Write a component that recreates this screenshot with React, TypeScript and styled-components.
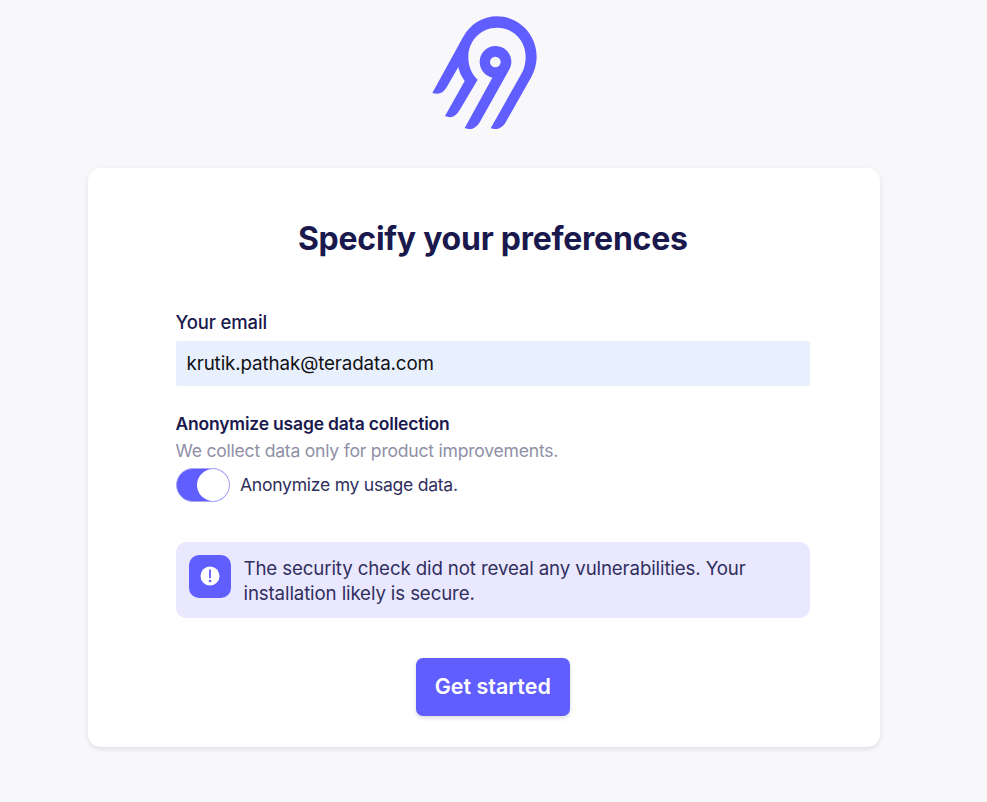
import React from "react";
import styled, { createGlobalStyle } from "styled-components";

const GlobalStyle = createGlobalStyle`
  * { box-sizing: border-box; }
  body {
    margin: 0;
    background: #f8f8fb;
    font-family: Inter, "Liberation Sans", sans-serif;
    color: #1a194d;
  }
`;

const Page = styled.main`
  height: 802px;
  overflow: hidden;
  display: flex;
  flex-direction: column;
  padding: 5px 107px 0 88px;
`;

const LogoMark = styled.svg`
  flex: none;
  width: 130px;
  height: 135px;
  margin-left: 332px;
  fill: #615eff;
`;

const Card = styled.section`
  flex: none;
  height: 579px;
  margin-top: 28px;
  padding: 47px 70px 0 87.5px;
  display: flex;
  flex-direction: column;
  background: #fff;
  border-radius: 13px;
  box-shadow: 0 2px 5px rgba(26, 25, 77, 0.12);
`;

const Title = styled.h1`
  margin: 0;
  text-align: center;
  font-size: 32px;
  line-height: 48px;
  font-weight: 700;
  letter-spacing: -0.25px;
  white-space: nowrap;
`;

const Label = styled.label`
  margin-top: 46px;
  font-size: 18.5px;
  line-height: 26px;
  font-weight: 500;
  letter-spacing: -0.12px;
`;

const EmailInput = styled.input`
  width: 634px;
  height: 45px;
  margin-top: 6px;
  padding: 0 11px;
  border: 0;
  border-radius: 2px;
  outline: 0;
  background: #e8f0fe;
  color: #101014;
  font: 400 18.8px/26px Inter, "Liberation Sans", sans-serif;
  letter-spacing: -0.12px;
`;

const SectionTitle = styled.h2`
  margin: 24px 0 0;
  font-size: 17.5px;
  line-height: 27px;
  font-weight: 600;
  letter-spacing: -0.19px;
`;

const Hint = styled.p`
  margin: 0;
  font-size: 17.6px;
  line-height: 27px;
  letter-spacing: -0.24px;
  color: #8f8fa6;
`;

const ToggleRow = styled.div`
  display: flex;
  align-items: center;
  gap: 10px;
  height: 34px;
  margin-top: 4px;
  color: #302f5e;
`;

const ToggleText = styled.span`
  padding-bottom: 1px;
  font-size: 17.6px;
  line-height: 24px;
  letter-spacing: -0.28px;
`;

const Switch = styled.button<{ $on: boolean }>`
  display: flex;
  justify-content: ${(p) => (p.$on ? "flex-end" : "flex-start")};
  width: 54.5px;
  height: 34px;
  padding: 0;
  border: 1px solid #aaa8f5;
  border-radius: 17px;
  background: ${(p) => (p.$on ? "#615eff" : "#d9d9e3")};
`;

const Knob = styled.span`
  width: 32px;
  height: 32px;
  border-radius: 50%;
  background: #fff;
`;

const Notice = styled.div`
  display: flex;
  gap: 13px;
  height: 76px;
  margin-top: 40px;
  padding: 12.5px 13px;
  border-radius: 10px;
  background: #eae8ff;
`;

const NoticeIcon = styled.div`
  flex: none;
  display: grid;
  place-items: center;
  width: 42px;
  height: 43px;
  border-radius: 10px;
  background: #615eff;
`;

const NoticeText = styled.p`
  margin: 0;
  padding-top: 1px;
  font-size: 18.7px;
  line-height: 25px;
  letter-spacing: -0.13px;
  color: #302f5e;
  white-space: nowrap;
`;

const Submit = styled.button`
  align-self: center;
  width: 153.5px;
  height: 58px;
  margin-top: 40px;
  padding: 0 0 2px;
  border: 0;
  border-radius: 7px;
  background: #615eff;
  color: #fff;
  font: 600 21.5px/30px Inter, "Liberation Sans", sans-serif;
  box-shadow: 0 2px 4px rgba(26, 25, 77, 0.16);
`;

function Logo() {
  return (
    <LogoMark viewBox="0 0 390 405" aria-label="Logo">
      <path d="M37 264 L128 98 C151 57 188 34 231 34 C297 34 350 88 350 155 C350 176 344 198 334 216 L258 350 C247 369 231 376 212 370 L305 205 C313 191 317 172 317 155 C317 107 279 68 231 68 C183 68 145 107 145 155 C145 184 155 207 173 224 L119 315 C108 335 93 341 75 333 L134 228 C125 216 118 201 115 186 L80 247 C70 265 55 270 37 264 Z" />
      <path
        fillRule="evenodd"
        d="M217 218 C195 213 179 193 179 171 C179 144 200 123 226 123 C253 123 274 144 274 171 C274 180 271 188 267 195 L180 350 C168 371 152 376 134 369 Z M226 155 A16 16 0 1 0 226 187 A16 16 0 1 0 226 155 Z"
      />
    </LogoMark>
  );
}

export default function App() {
  const [anonymize, setAnonymize] = React.useState(true);
  return (
    <>
      <GlobalStyle />
      <Page>
        <Logo />
        <Card>
          <Title>Specify your preferences</Title>
          <Label htmlFor="email">Your email</Label>
          <EmailInput id="email" defaultValue="krutik.pathak@teradata.com" />
          <SectionTitle>Anonymize usage data collection</SectionTitle>
          <Hint>We collect data only for product improvements.</Hint>
          <ToggleRow>
            <Switch
              type="button"
              role="switch"
              aria-checked={anonymize}
              $on={anonymize}
              onClick={() => setAnonymize(!anonymize)}
            >
              <Knob />
            </Switch>
            <ToggleText>Anonymize my usage data.</ToggleText>
          </ToggleRow>
          <Notice>
            <NoticeIcon>
              <svg width="20" height="20" viewBox="0 0 20 20">
                <circle cx="10" cy="10" r="9.5" fill="#fff" />
                <path d="M10 4.2V11.5" stroke="#615eff" strokeWidth="1.8" strokeLinecap="round" />
                <circle cx="10" cy="15" r="1.3" fill="#615eff" />
              </svg>
            </NoticeIcon>
            <NoticeText>
              The security check did not reveal any vulnerabilities. Your
              <br />
              installation likely is secure.
            </NoticeText>
          </Notice>
          <Submit type="button">Get started</Submit>
        </Card>
      </Page>
    </>
  );
}
